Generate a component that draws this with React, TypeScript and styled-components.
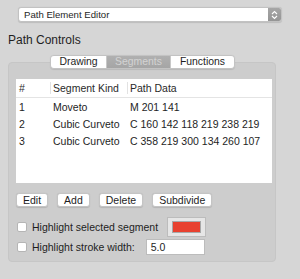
import styled, { createGlobalStyle } from 'styled-components'

const GlobalStyle = createGlobalStyle`
  html, body {
    margin: 0;
    padding: 0;
    background: #d6d6d6;
    font-family: "Liberation Sans", Arial, sans-serif;
    color: #1e1e1e;
  }
  * { box-sizing: border-box; }
`

const Page = styled.div`
  width: 300px;
  height: 279px;
  padding: 7px 0 0 8px;
  display: flex;
  flex-direction: column;
`

const Select = styled.div`
  margin-left: 10px;
  width: 264px;
  height: 15px;
  display: flex;
  align-items: stretch;
  background: #fff;
  border: 1px solid #c2c2c2;
  border-radius: 3px;
  box-shadow: 0 0.5px 1px rgba(0, 0, 0, 0.12);
  overflow: hidden;
`

const SelectLabel = styled.span`
  flex: 1;
  padding-left: 5px;
  font-size: 9.6px;
  line-height: 13px;
  color: #262626;
`

const Stepper = styled.span`
  width: 13px;
  display: flex;
  align-items: center;
  justify-content: center;
  background: linear-gradient(#a6a6a6, #959595);
`

const Title = styled.div`
  margin-top: 11px;
  font-size: 12px;
  line-height: 14px;
  color: #1f1f1f;
`

const TabBar = styled.div`
  margin: 8px 0 -7px 42px;
  height: 14px;
  display: flex;
  position: relative;
  z-index: 1;
  align-self: flex-start;
  border: 1px solid #c3c3c3;
  border-radius: 4px;
  overflow: hidden;
  box-shadow: 0 0.5px 1px rgba(0, 0, 0, 0.1);
`

const Tab = styled.div<{ $width: number; $active?: boolean }>`
  width: ${({ $width }) => $width}px;
  display: flex;
  align-items: center;
  justify-content: center;
  font-size: 10.4px;
  line-height: 12px;
  color: ${({ $active }) => ($active ? '#d3d3d3' : '#1e1e1e')};
  background: ${({ $active }) => ($active ? 'linear-gradient(#b0b0b0, #a5a5a5)' : '#fff')};
  & + & {
    border-left: 1px solid #c8c8c8;
  }
`

const GroupBox = styled.div`
  width: 268px;
  height: 200px;
  background: #cdcdcd;
  border: 1px solid #c6c6c6;
  border-radius: 4px;
  padding: 16px 3px 0 7px;
  display: flex;
  flex-direction: column;
`

const Table = styled.div`
  height: 104px;
  background: #fff;
  display: grid;
  grid-template-columns: 34px 77px 1fr;
  grid-template-rows: 19px;
  grid-auto-rows: 17px;
  align-content: start;
  font-size: 10.5px;
`

const Row = styled.div`
  display: contents;
`

const HeadCell = styled.div<{ $divider?: boolean }>`
  display: flex;
  align-items: center;
  padding-left: 3px;
  border-bottom: 1px solid #e4e4e4;
  position: relative;
  color: #2a2a2a;
  &::before {
    content: '';
    display: ${({ $divider }) => ($divider ? 'block' : 'none')};
    position: absolute;
    left: 0;
    top: 3px;
    bottom: 3px;
    width: 1px;
    background: #e2e2e2;
  }
`

const Cell = styled.div`
  display: flex;
  align-items: center;
  padding-left: 3px;
  white-space: nowrap;
`

const Buttons = styled.div`
  margin-top: 10px;
  display: flex;
  gap: 9px;
`

const Button = styled.button`
  height: 14px;
  padding: 0 6px;
  font-family: inherit;
  font-size: 10.5px;
  line-height: 12px;
  color: #1e1e1e;
  background: #fff;
  border: 1px solid #c4c4c4;
  border-radius: 3px;
  box-shadow: 0 0.5px 1px rgba(0, 0, 0, 0.12);
`

const OptionRow = styled.div<{ $top: number }>`
  margin-top: ${({ $top }) => $top}px;
  display: flex;
  align-items: center;
  font-size: 10.5px;
  color: #1e1e1e;
`

const Check = styled.span`
  width: 10px;
  height: 10px;
  margin-left: 1px;
  margin-right: 5px;
  background: #fff;
  border: 1px solid #b5b5b5;
  border-radius: 2px;
`

const ColorWell = styled.div`
  margin-left: 9px;
  width: 39px;
  height: 20px;
  padding: 3px 4px;
  background: #e6e6e6;
  border: 1px solid #bcbcbc;
`

const Swatch = styled.div`
  height: 100%;
  background: #e8412f;
  border: 1px solid #a8a8a8;
`

const Field = styled.div`
  margin-left: 11px;
  width: 59px;
  height: 16px;
  padding-left: 4px;
  display: flex;
  align-items: center;
  background: #fff;
  border: 1px solid #bcbcbc;
`

const rows = [
  ['1', 'Moveto', 'M 201 141'],
  ['2', 'Cubic Curveto', 'C 160 142 118 219 238 219'],
  ['3', 'Cubic Curveto', 'C 358 219 300 134 260 107'],
]

export default function App() {
  return (
    <>
      <GlobalStyle />
      <Page>
        <Select>
          <SelectLabel>Path Element Editor</SelectLabel>
          <Stepper>
            <svg width="7" height="10" viewBox="0 0 7 10" fill="none" stroke="#fff" strokeWidth="1.1">
              <path d="M1 4 L3.5 1.5 L6 4" />
              <path d="M1 6 L3.5 8.5 L6 6" />
            </svg>
          </Stepper>
        </Select>
        <Title>Path Controls</Title>
        <TabBar>
          <Tab $width={55}>Drawing</Tab>
          <Tab $width={64} $active>Segments</Tab>
          <Tab $width={64}>Functions</Tab>
        </TabBar>
        <GroupBox>
          <Table>
            <Row>
              <HeadCell>#</HeadCell>
              <HeadCell $divider>Segment Kind</HeadCell>
              <HeadCell $divider>Path Data</HeadCell>
            </Row>
            {rows.map((r) => (
              <Row key={r[0]}>
                {r.map((c, i) => (
                  <Cell key={i}>{c}</Cell>
                ))}
              </Row>
            ))}
          </Table>
          <Buttons>
            <Button>Edit</Button>
            <Button>Add</Button>
            <Button>Delete</Button>
            <Button>Subdivide</Button>
          </Buttons>
          <OptionRow $top={10}>
            <Check />
            Highlight selected segment
            <ColorWell>
              <Swatch />
            </ColorWell>
          </OptionRow>
          <OptionRow $top={2}>
            <Check />
            Highlight stroke width:
            <Field>5.0</Field>
          </OptionRow>
        </GroupBox>
      </Page>
    </>
  )
}
